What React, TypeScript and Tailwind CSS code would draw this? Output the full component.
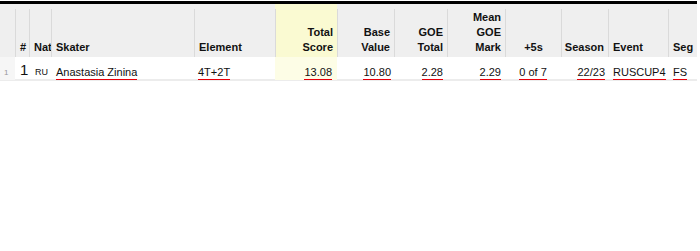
import React from 'react';

type Col = { label: string[]; align: 'left' | 'right' | 'center'; yellow?: boolean };

const cols: Col[] = [
  { label: [''], align: 'left' },
  { label: ['#'], align: 'left' },
  { label: ['Nat'], align: 'left' },
  { label: ['Skater'], align: 'left' },
  { label: ['Element'], align: 'left' },
  { label: ['Total', 'Score'], align: 'right', yellow: true },
  { label: ['Base', 'Value'], align: 'right' },
  { label: ['GOE', 'Total'], align: 'right' },
  { label: ['Mean', 'GOE', 'Mark'], align: 'right' },
  { label: ['+5s'], align: 'center' },
  { label: ['Season'], align: 'right' },
  { label: ['Event'], align: 'left' },
  { label: ['Seg'], align: 'left' },
];

const alignClass = {
  left: 'justify-start text-left',
  right: 'justify-end text-right',
  center: 'justify-center text-center',
};

const gridCols =
  'grid grid-cols-[15px_14px_22px_143px_81px_62px_57px_53px_58px_56px_47px_60px_29px]';

// red underline drawn as a separate 1px bar under the text
const Link: React.FC<{ children: React.ReactNode }> = ({ children }) => (
  <span className="inline-flex flex-col cursor-pointer">
    <span className="leading-[13px]">{children}</span>
    <span className="h-[1px] bg-red-600" />
  </span>
);

const App: React.FC = () => {
  return (
    <div className="w-[700px] h-[251px] bg-white font-['Liberation_Sans',Arial,sans-serif] text-[#111]">
      <div className="w-[697px] pt-[1px]">
        <div className="h-[3px] bg-black" />

        <div className={`${gridCols} bg-[#efefef] h-[53px]`}>
          {cols.map((c, i) => (
            <div key={i} className={`flex flex-col pt-[5px] ${c.yellow ? 'bg-[#fafad2]' : ''}`}>
              <div
                className={`flex-1 flex items-end px-[4px] pb-[2px] ${i > 0 ? 'border-l border-[#dadada]' : ''} ${alignClass[c.align]}`}
              >
                <div className="text-[11px] leading-[15px] font-bold whitespace-nowrap">
                  {c.label.map((l, j) => (
                    <div key={j}>{l}</div>
                  ))}
                </div>
              </div>
            </div>
          ))}
        </div>

        <div className={`${gridCols} h-[24px] border-b-2 border-[#ececec] text-[11px] leading-[15px]`}>
          <div className="bg-[#f6f6f6] pt-[8px] pl-[4px] text-[8px] leading-[15px] text-[#999]">1</div>
          <div className="pt-[4px] pl-[5px] text-[15px] leading-[17px]">1</div>
          <div className="pt-[8px] pl-[6px] text-[9px] leading-[15px]">RU</div>
          <div className="pt-[8px] pl-[5px]"><Link>Anastasia Zinina</Link></div>
          <div className="pt-[8px] pl-[4px]"><Link>4T+2T</Link></div>
          <div className="pt-[8px] pr-[5px] text-right bg-[#fdfde6]"><Link>13.08</Link></div>
          <div className="pt-[8px] pr-[3px] text-right"><Link>10.80</Link></div>
          <div className="pt-[8px] pr-[4px] text-right"><Link>2.28</Link></div>
          <div className="pt-[8px] pr-[4px] text-right"><Link>2.29</Link></div>
          <div className="pt-[8px] text-center"><Link>0 of 7</Link></div>
          <div className="pt-[8px] pr-[3px] text-right"><Link>22/23</Link></div>
          <div className="pt-[8px] pl-[5px]"><Link>RUSCUP4</Link></div>
          <div className="pt-[8px] pl-[5px]"><Link>FS</Link></div>
        </div>
      </div>
    </div>
  );
};

export default App;
